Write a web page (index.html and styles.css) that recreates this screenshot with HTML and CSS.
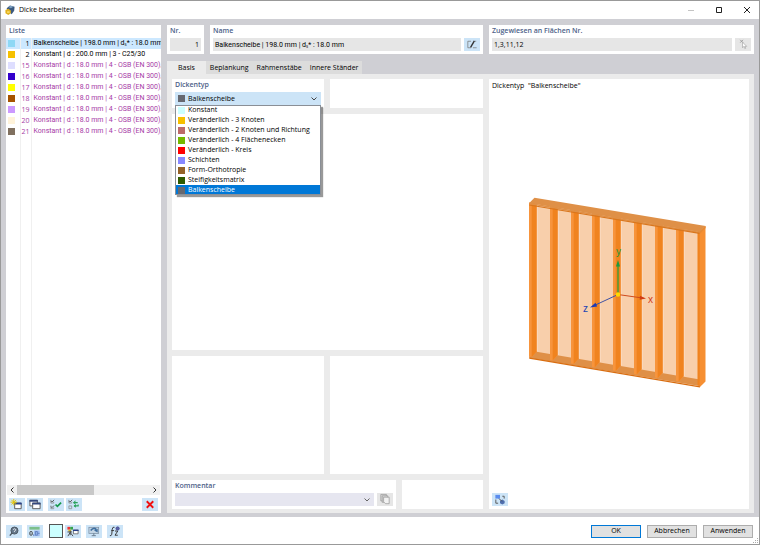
FILE: index.html
```html
<!DOCTYPE html>
<html lang="de">
<head>
<meta charset="utf-8">
<title>Dicke bearbeiten</title>
<link rel="stylesheet" href="styles.css">
</head>
<body>
<div class="window">
  <header class="titlebar">
    <svg class="app-icon" viewBox="0 0 12 12" aria-hidden="true">
      <path d="M2 4 6 .5 11.500 2 11 7 8 11 3 7Z" fill="#3c5a80"/><path d="M4 2.500 7 1 10 2 7 4Z" fill="#7fa3c4"/>
      <path d="M.5 6 4 4.500 7 6.500 7 10 4 12 .5 10Z" fill="#e2b21e"/><path d="M2.500 7.500h3v2h-3z" fill="#f8dc6a"/>
    </svg>
    <h1>Dicke bearbeiten</h1>
    <div class="window-controls">
      <button type="button" aria-label="Minimieren" disabled><svg viewBox="0 0 8 8"><path d="M1 4.500h6" stroke="#c4c4c4"/></svg></button>
      <button type="button" aria-label="Maximieren"><svg viewBox="0 0 8 8"><path d="M1.500 1.500h5v5h-5z" fill="none" stroke="#222"/></svg></button>
      <button type="button" aria-label="Schließen"><svg viewBox="0 0 8 8"><path d="M1 1l6 6M7 1 1 7" stroke="#222"/></svg></button>
    </div>
  </header>

  <main class="workspace">
    <section class="card list-panel">
      <h2>Liste</h2>
      <div class="list-scroll">
        <table class="list">
          <colgroup><col class="col-color"><col class="col-no"><col></colgroup>
          <tbody>
            <tr class="selected"><td><i class="swatch sky"></i></td><td>1</td><td>Balkenscheibe | 198.0 mm | dₛ* : 18.0 mm</td></tr>
            <tr><td><i class="swatch amber"></i></td><td>2</td><td>Konstant | d : 200.0 mm | 3 - C25/30</td></tr>
            <tr class="unused"><td><i class="swatch lavender"></i></td><td>15</td><td>Konstant | d : 18.0 mm | 4 - OSB (EN 300),</td></tr>
            <tr class="unused"><td><i class="swatch indigo"></i></td><td>16</td><td>Konstant | d : 18.0 mm | 4 - OSB (EN 300),</td></tr>
            <tr class="unused"><td><i class="swatch yellow"></i></td><td>17</td><td>Konstant | d : 18.0 mm | 4 - OSB (EN 300),</td></tr>
            <tr class="unused"><td><i class="swatch brown"></i></td><td>18</td><td>Konstant | d : 18.0 mm | 4 - OSB (EN 300),</td></tr>
            <tr class="unused"><td><i class="swatch violet"></i></td><td>19</td><td>Konstant | d : 18.0 mm | 4 - OSB (EN 300),</td></tr>
            <tr class="unused"><td><i class="swatch cream"></i></td><td>20</td><td>Konstant | d : 18.0 mm | 4 - OSB (EN 300),</td></tr>
            <tr class="unused"><td><i class="swatch taupe"></i></td><td>21</td><td>Konstant | d : 18.0 mm | 4 - OSB (EN 300),</td></tr>
            <tr class="filler"><td></td><td></td><td></td></tr>
          </tbody>
        </table>
      </div>
      <div class="scrollbar">
        <button type="button" aria-label="Nach links"><svg viewBox="0 0 8 8"><path d="M5.500 1.500 3 4l2.500 2.500" fill="none" stroke="#333"/></svg></button>
        <div class="track"><div class="thumb"></div></div>
        <button type="button" aria-label="Nach rechts"><svg viewBox="0 0 8 8"><path d="M2.500 1.500 5 4 2.500 6.500" fill="none" stroke="#333"/></svg></button>
      </div>
      <div class="list-tools">
        <button type="button" class="tool" aria-label="Neu"><svg viewBox="0 0 16 14"><path d="M5.500 5.500h7v6h-7z" fill="#fff" stroke="#555"/><path d="M5 5h8v2H5z" fill="#27408b"/><path d="M4.500 1v7M1 4.500h7M2 2l5 5M7 2 2 7" stroke="#e6c400"/></svg></button>
        <button type="button" class="tool" aria-label="Kopieren"><svg viewBox="0 0 16 14"><path d="M2.500 2.500h8v6h-8z" fill="#fff" stroke="#555"/><path d="M2 2h9v2H2z" fill="#33477c"/><path d="M5.500 5.500h8v6h-8z" fill="#fff" stroke="#555"/><path d="M5 5h9v2H5z" fill="#33477c"/></svg></button>
        <span class="spacer"></span>
        <button type="button" class="tool" aria-label="Alle auswählen"><svg viewBox="0 0 16 14"><path d="M2.500 3 3.500 4.500 6 2M2.500 9 3.500 10.500 6 8" fill="none" stroke="#555"/><path d="M2.500 2v3.500h3V4M2.500 8v3.500h3V10" fill="none" stroke="#888" stroke-width=".8"/><path d="M7.500 7l2 2L13.500 5" fill="none" stroke="#16984c" stroke-width="1.800"/></svg></button>
        <button type="button" class="tool" aria-label="Auswahl umkehren"><svg viewBox="0 0 16 14"><path d="M2.500 3 3.500 4.500 6 2" fill="none" stroke="#555"/><path d="M2.500 2v3.500h3V4M2.500 8.500h3v3h-3z" fill="none" stroke="#888" stroke-width=".8"/><path d="M7.500 5H12M8 8.500h4.500V7" fill="none" stroke="#2aa35c" stroke-width="1.200"/><path d="M9.500 2.500V7L7 5zM10 6.500v4l-2.500-2z" fill="#2aa35c"/></svg></button>
        <button type="button" class="tool push" aria-label="Löschen"><svg viewBox="0 0 16 14"><path d="M4.500 3.500l7 7M11.500 3.500l-7 7" stroke="#f01010" stroke-width="2"/></svg></button>
      </div>
    </section>

    <div class="editor">
      <div class="summary">
        <section class="card field-card">
          <label for="no">Nr.</label>
          <div class="field-row"><input id="no" class="number" value="1" readonly></div>
        </section>
        <section class="card field-card">
          <label for="name">Name</label>
          <div class="field-row">
            <input id="name" class="formula" value="Balkenscheibe | 198.0 mm | dₛ* : 18.0 mm" readonly>
            <button type="button" class="tool" aria-label="Name bearbeiten"><svg viewBox="0 0 16 14"><path d="M7 3.500H3.500v7h3.500M9 10.500h4M10.500 3.500h2" fill="none" stroke="#777" stroke-width=".8"/><path d="M6.500 10 10.500 3" stroke="#333" stroke-width="1.500"/></svg></button>
          </div>
        </section>
        <section class="card field-card">
          <label for="assigned">Zugewiesen an Flächen Nr.</label>
          <div class="field-row">
            <input id="assigned" value="1,3,11,12" readonly>
            <button type="button" class="tool off" aria-label="Auswählen" disabled><svg viewBox="0 0 16 14"><path d="M5 2l3 3M8 2 5 5" stroke="#999"/><path d="M7.500 4.500v6l1.500-1.500 1 2.500 1-.5-1-2h2z" fill="#fff" stroke="#aaa" stroke-width=".8"/></svg></button>
          </div>
        </section>
      </div>

      <nav class="tabs" role="tablist">
        <button type="button" role="tab" aria-selected="true">Basis</button>
        <button type="button" role="tab" aria-selected="false">Beplankung</button>
        <button type="button" role="tab" aria-selected="false">Rahmenstäbe</button>
        <button type="button" role="tab" aria-selected="false">Innere Ständer</button>
      </nav>

      <div class="tab-panel">
        <div class="form-column">
          <div class="pair">
            <section class="card field-card">
              <label for="type">Dickentyp</label>
              <div class="combo">
                <i class="swatch slate"></i>
                <select id="type"><option>Balkenscheibe</option></select>
                <svg class="chevron" viewBox="0 0 8 8" aria-hidden="true"><path d="M1.500 2.500 4 5l2.500-2.500" fill="none" stroke="#444"/></svg>
                <ul class="menu" role="listbox" aria-label="Dickentyp">
                  <li role="option"><i class="swatch ice"></i>Konstant</li>
                  <li role="option"><i class="swatch amber"></i>Veränderlich - 3 Knoten</li>
                  <li role="option"><i class="swatch rose"></i>Veränderlich - 2 Knoten und Richtung</li>
                  <li role="option"><i class="swatch lime"></i>Veränderlich - 4 Flächenecken</li>
                  <li role="option"><i class="swatch red"></i>Veränderlich - Kreis</li>
                  <li role="option"><i class="swatch periwinkle"></i>Schichten</li>
                  <li role="option"><i class="swatch umber"></i>Form-Orthotropie</li>
                  <li role="option"><i class="swatch forest"></i>Steifigkeitsmatrix</li>
                  <li role="option" aria-selected="true"><i class="swatch slate"></i>Balkenscheibe</li>
                </ul>
              </div>
            </section>
            <section class="card"></section>
          </div>
          <section class="card"></section>
          <div class="pair">
            <section class="card"></section>
            <section class="card"></section>
          </div>
          <div class="comment-row">
            <section class="card field-card">
              <label for="comment">Kommentar</label>
              <div class="field-row">
                <div class="combo comment">
                  <select id="comment"><option></option></select>
                  <svg class="chevron" viewBox="0 0 8 8" aria-hidden="true"><path d="M1.500 2.500 4 5l2.500-2.500" fill="none" stroke="#666"/></svg>
                </div>
                <button type="button" class="tool off" aria-label="Kommentar übernehmen" disabled><svg viewBox="0 0 16 14"><path d="M3.500 1.500h6v7h-6z" fill="#ddd" stroke="#999" stroke-width=".8"/><path d="M5 3h6v7H5z" fill="#ddd" stroke="#999" stroke-width=".8"/><path d="M6.500 4.500h6v7h-4l-2-2z" fill="#f2f2f2" stroke="#999" stroke-width=".8"/></svg></button>
              </div>
            </section>
            <section class="card"></section>
          </div>
        </div>

        <section class="card preview">
          <p>Dickentyp &nbsp;"Balkenscheibe"</p>
          <svg class="scene" viewBox="489 105 260 375" role="img" aria-label="Balkenscheibe in 3D">
            <defs>
              <g id="stud">
                <path d="M550 206V360l3 .5 5-5.500V206z" fill="#f7943c"/>
                <path d="M552.700 206V360.500L557.600 355V206z" fill="#f0831f"/>
                <path d="M558.300 206V355" stroke="#fbe0c8" stroke-width=".7"/>
              </g>
            </defs>
            <path d="M529.300 203 700 231V386L529.300 358z" fill="#f8cfab"/>
            <path d="M529.300 350.400 700 379.500V386L529.300 358z" fill="#df9047"/>
            <use href="#stud" x="-21" y="-3.500"/>
            <use href="#stud"/>
            <use href="#stud" x="21" y="3.500"/>
            <use href="#stud" x="42" y="7"/>
            <use href="#stud" x="63" y="10.500"/>
            <use href="#stud" x="84" y="14"/>
            <use href="#stud" x="105" y="17.500"/>
            <use href="#stud" x="126" y="21"/>
            <path d="M697.500 231V385l2.500 1.500V231z" fill="#f0831f"/>
            <path d="M699.700 231 705.500 226V381.500L699.700 387.300z" fill="#f68f32"/>
            <path d="M529.300 358.200 700 386.800" stroke="#d96d10" stroke-width="1.200"/>
            <path d="M529.300 203 534.500 197.700 705.600 226 699.700 232z" fill="#df9047"/>
            <path d="M529.300 203.600 700 232.400" stroke="#df9047" stroke-width="1.500"/>
            <path d="M529.300 205 699.700 233.400" stroke="#d9761d" stroke-width="1.200"/>
            <path d="M699.700 234 705.600 228V226L699.700 231.700z" fill="#e68a35"/>
            <path d="M618 294V265" stroke="#4c9a35" stroke-width="1.500"/><path d="M616 266.500 618 260l2 6.500z" fill="#1c9b41"/>
            <path d="M618 294.500 641 297.800" stroke="#cf4a1c"/><path d="M640 295.800 646 298.500 639.700 299.800z" fill="#d03c14"/>
            <path d="M618 294.500 595 305.200" stroke="#4052a4"/><path d="M595.500 302.700 590 307.500 597.200 306.500z" fill="#1d3bb5"/>
            <circle cx="618" cy="294.500" r="2.300" fill="#ffd800"/>
            <text class="axis-label" x="616" y="255" fill="#23993c">y</text>
            <text class="axis-label" x="648" y="303" fill="#d03c1c">x</text>
            <text class="axis-label" x="583" y="312" fill="#2142b4">z</text>
          </svg>
          <div class="preview-tools">
            <button type="button" class="tool" aria-label="Ansicht wechseln"><svg viewBox="0 0 16 14"><path d="M3 2h5v4H3z" fill="#5b8def"/><path d="M3.500 7v4h2.500M12.500 6V3.500h-2" fill="none" stroke="#555"/><path d="M8 8.500 10.500 7 13 8.500v2.500L10.500 12.500 8 11z" fill="#4f6fae"/><path d="M7 6l3 3" stroke="#444"/></svg></button>
          </div>
        </section>
      </div>
    </div>
  </main>

  <footer class="footer">
    <button type="button" class="tool" aria-label="Hilfe"><svg viewBox="0 0 16 14"><circle cx="8.500" cy="6" r="3.800" fill="#66788c" stroke="#4a545e"/><path d="M3.500 11.500 6 8.500" stroke="#4a545e" stroke-width="1.500"/><path d="M7 5q1.500-2 3 0 0 1-1.500 1.500v1" fill="none" stroke="#fff" stroke-width=".8"/></svg></button>
    <button type="button" class="tool" aria-label="Einheiten"><svg viewBox="0 0 16 14"><path d="M2 2h11v3H2z" fill="#7cc08b"/><path d="M7 6h6v6H7z" fill="#9bb9ee"/><rect x="2.500" y="7" width="2.500" height="4" rx="1" fill="none" stroke="#333"/><path d="M6.500 10v2M8.500 7h2v4h-2zM11 9h2" fill="none" stroke="#5577b8" stroke-width=".8"/></svg></button>
    <div class="color-group">
      <button type="button" class="color-button" aria-label="Farbe"></button>
      <button type="button" class="tool" aria-label="Anzeigeoptionen"><svg viewBox="0 0 16 14"><path d="M2 2h3v3H2z" fill="#e33"/><path d="M5 2h3v3H5z" fill="#35a34b"/><path d="M3 5h3v2H3z" fill="#e3c425"/><path d="M5 6v5M2.500 12 5 8l3 4M2 7.500h5" fill="none" stroke="#444"/><path d="M8.500 5.500h5v4h-5z" fill="#fff" stroke="#555" stroke-width=".8"/><path d="M8 5h6v1.500H8z" fill="#27408b"/></svg></button>
    </div>
    <button type="button" class="tool" aria-label="Ansicht"><svg viewBox="0 0 16 14"><rect x="2.500" y="2.500" width="10.500" height="6.500" fill="#c4d6e6" stroke="#7b8fa3" stroke-width=".8"/><path d="M4.500 6Q7.500 2 10.500 5" fill="none" stroke="#3f6f9f" stroke-width="1.800"/><path d="M8 6l4-2v4z" fill="#3f6f9f"/><path d="M7.800 9v2.500M5.500 11.500h4.500" stroke="#66798c"/></svg></button>
    <button type="button" class="tool" aria-label="Formel"><svg viewBox="0 0 16 14"><path d="M7.500 2.500q-2-1-2.500 2L4.500 10q-.5 2-2 1.500M4 6h3M8 6.500h3l-3 4.500h3" fill="none" stroke="#333"/><circle cx="10.800" cy="3.800" r="1.800" fill="#5c64ae" stroke="#454a8a" stroke-width=".8"/></svg></button>
    <div class="actions">
      <button type="button" class="action primary">OK</button>
      <button type="button" class="action">Abbrechen</button>
      <button type="button" class="action">Anwenden</button>
    </div>
    <svg class="grip" viewBox="0 0 6 6" aria-hidden="true"><path d="M4 0h1v1H4zM4 2h1v1H4zM4 4h1v1H4zM2 2h1v1H2zM2 4h1v1H2zM0 4h1v1H0z" fill="#aaa"/></svg>
  </footer>
</div>
</body>
</html>
```
FILE: styles.css
```css
* { box-sizing: border-box; }

body {
  margin: 0;
  font: 7px/10px "Open Sans", "Noto Sans", sans-serif;
  color: #000;
}

button, input, select { font: inherit; color: inherit; margin: 0; padding: 0; border: 0; border-radius: 0; }
svg { display: block; }

.window {
  position: relative;
  display: flex;
  flex-direction: column;
  min-height: 100vh;
  border: 1px solid #999;
  background: #fff;
}

.titlebar { display: flex; align-items: center; height: 18px; padding: 0 4px; gap: 4px; }
.titlebar h1 { margin: 0; font-size: 7px; font-weight: 400; color: #000; }
.app-icon { width: 10px; height: 10px; }
.window-controls { display: flex; gap: 12px; margin-left: auto; }
.window-controls button { width: 16px; height: 16px; padding: 4px; background: none; }
.window-controls svg { width: 8px; height: 8px; }

.workspace {
  flex: 1;
  display: grid;
  grid-template-columns: 155fr 587fr;
  gap: 6px;
  padding: 6px 5px 4px;
  background: #cfcfd4;
}

.card { min-width: 0; background: #fff; }
.card h2, .field-card label { display: block; margin: 0; font-size: 7px; line-height: 10px; font-weight: 600; color: #4d6188; }

.list-panel { display: flex; flex-direction: column; }
.list-panel h2 { padding: 1px 3px 2px; }
.list-scroll { flex: 1; display: flex; overflow: hidden; }
.list { width: 100%; height: 100%; table-layout: fixed; border-collapse: collapse; white-space: nowrap; }
.col-color { width: 14px; }
.col-no { width: 11px; }
.list tr { height: 11px; }
.list td { padding: 0; overflow: hidden; line-height: 11px; }
.list td + td { border-left: 1px solid #f0f0f0; }
.list td:nth-child(1) { padding-left: 2px; }
.list td:nth-child(2) { text-align: right; padding-right: 1px; }
.list td:nth-child(3) { padding-left: 2px; }
.list td:nth-child(3), .formula { font-family: Roboto, "Open Sans", sans-serif; }
.list .selected { background: #cce8ff; }
.list .unused { color: #a63ba6; }
.list .filler { height: auto; }

.swatch { display: block; flex: none; width: 7px; height: 7px; }
.sky { background: #8ed8f5; }
.amber { background: #f6c000; }
.lavender { background: #dedeff; }
.indigo { background: #3300cc; }
.yellow { background: #ffff00; }
.brown { background: #a65300; }
.violet { background: #cc99ff; }
.cream { background: #fff3da; }
.taupe { background: #80705f; }
.slate { background: #666870; }
.ice { background: #ccffff; }
.rose { background: #bd6b6b; }
.lime { background: #76b900; }
.red { background: #ff0000; }
.periwinkle { background: #8888ff; }
.umber { background: #946228; }
.forest { background: #2f5b00; }

.scrollbar { display: flex; align-items: center; height: 10px; margin: 0 1px; background: #f0f0f0; }
.scrollbar button { width: 10px; height: 10px; padding: 1px; background: none; }
.scrollbar svg { width: 8px; height: 8px; }
.track { flex: 1; height: 10px; }
.thumb { width: 58%; height: 10px; background: #c8c8c8; }

.list-tools { display: flex; gap: 2px; padding: 3px 3px 2px; }
.tool { flex: none; width: 16px; height: 13px; background: #cce4f7; }
.tool svg { width: 16px; height: 13px; }
.tool.off { background: #e6e6e6; }
.spacer { width: 1px; }
.push { margin-left: auto; }

.editor { display: flex; flex-direction: column; min-width: 0; }
.summary { display: grid; grid-template-columns: 37px 1fr 265px; gap: 6px; }
.field-card { padding: 1px 3px 3px; }
.field-card label { padding-bottom: 2px; }
.field-row { display: flex; gap: 3px; }
.field-row input { flex: 1; width: 0; height: 13px; padding: 0 2px; background: #e6e6e6; }
.field-row .number { text-align: right; }

.tabs { display: flex; margin-top: 7px; }
.tabs button { height: 13px; padding: 0 4px; background: #dcdcdc; }
.tabs button[aria-selected="true"] { padding: 0 11px; background: #ebebeb; }

.tab-panel {
  flex: 1;
  display: grid;
  grid-template-columns: 1fr 260px;
  gap: 6px;
  padding: 5px 5px 4px;
  background: #ebebeb;
}
.form-column { display: grid; grid-template-rows: auto 2fr 1fr auto; gap: 6px; min-width: 0; }
.pair { display: grid; grid-template-columns: 152fr 153fr; gap: 6px; }
.comment-row { display: grid; grid-template-columns: 1fr 81px; gap: 6px; }

.combo { position: relative; display: flex; align-items: center; gap: 3px; height: 13px; padding: 0 3px; background: #cce4f7; }
.combo select { flex: 1; min-width: 0; height: 13px; appearance: none; background: none; }
.combo.comment { flex: 1; background: #e6e6f0; }
.chevron { width: 8px; height: 8px; }

.menu {
  position: absolute;
  top: 100%;
  left: 0;
  right: 0;
  margin: 0;
  padding: 0;
  list-style: none;
  background: #fff;
  outline: 1px solid #8a8f96;
  outline-offset: -1px;
  box-shadow: 2px 2px 1px rgba(0, 0, 0, .4);
}
.menu li { display: flex; align-items: center; gap: 3px; height: 10px; padding-left: 3px; white-space: nowrap; }
.menu li[aria-selected="true"] { background: #0078d7; color: #fff; }

.preview { display: flex; flex-direction: column; }
.preview p { margin: 0; padding: 2px 3px 4px; }
.scene { flex: 1; width: 100%; height: 0; min-height: 200px; }
.axis-label { font: 10px "Liberation Sans", sans-serif; }
.preview-tools { display: flex; padding: 3px; }

.footer { display: flex; align-items: center; gap: 5px; height: 27px; padding: 1px 6px 0 5px; }
.color-group { display: flex; align-items: center; gap: 2px; padding-left: 1px; }
.color-button { width: 14px; height: 14px; border: 1px solid #555; background: #ccffff; }
.actions { display: flex; gap: 6px; margin-left: auto; }
.action { width: 50px; height: 13px; border: 1px solid #adadad; background: #e1e1e1; }
.action.primary { border-color: #0078d7; }
.grip { position: absolute; right: 0; bottom: 0; width: 6px; height: 6px; }
```
